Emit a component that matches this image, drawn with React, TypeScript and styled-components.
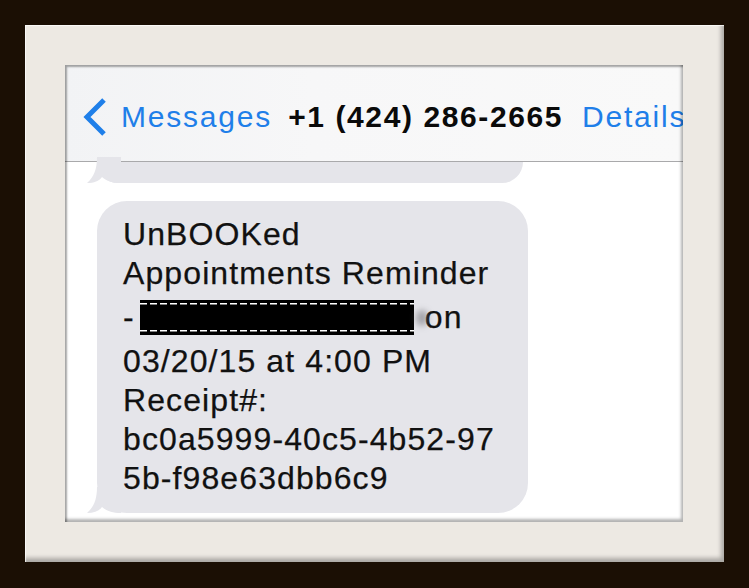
import React from "react";
import styled, { createGlobalStyle } from "styled-components";

const GlobalStyle = createGlobalStyle`
    html, body {
        margin: 0;
        padding: 0;
        background: #1b0f04;
    }
`;

const Frame = styled.div`
    width: 749px;
    height: 588px;
    box-sizing: border-box;
    padding: 25px;
    background: #1b0f04;
    font-family: "Liberation Sans", Arial, Helvetica, sans-serif;
`;

const Matte = styled.div`
    width: 699px;
    height: 537px;
    box-sizing: border-box;
    padding: 40px 0 0 40px;
    background: #ede9e3;
    box-shadow: inset 1px 1px 1px rgba(255, 255, 255, 0.8),
        inset -3px -4px 4px rgba(0, 0, 0, 0.28);
`;

const Screen = styled.div`
    position: relative;
    width: 618px;
    height: 457px;
    overflow: hidden;
    background: #ffffff;
    display: flex;
    flex-direction: column;

    &::after {
        content: "";
        position: absolute;
        inset: 0;
        pointer-events: none;
        box-shadow: inset 2px 2px 2px rgba(0, 0, 0, 0.35),
            inset -2px -3px 3px rgba(0, 0, 0, 0.3);
    }
`;

const NavBar = styled.div`
    flex-shrink: 0;
    height: 97px;
    box-sizing: border-box;
    padding: 8px 0 0 17px;
    display: flex;
    align-items: center;
    background: linear-gradient(90deg, #f2f3f5 0%, #f7f7f8 40%, #f9f9f9 100%);
    border-bottom: 1px solid #a9a9ab;
    white-space: nowrap;
`;

const BackChevron = styled.svg`
    flex-shrink: 0;
    width: 26px;
    height: 40px;
    margin-right: 13px;
`;

const NavLink = styled.span<{ $gap?: number }>`
    flex-shrink: 0;
    color: #1f7fe9;
    font-size: 30px;
    letter-spacing: 1.8px;
    margin-right: ${(p) => p.$gap ?? 0}px;
`;

const NavTitle = styled.span`
    flex-shrink: 0;
    color: #0a0a0a;
    font-size: 30px;
    font-weight: 700;
    letter-spacing: 1.6px;
    margin-right: 19px;
`;

const Thread = styled.div`
    display: flex;
    flex-direction: column;
    align-items: flex-start;
    padding-left: 32px;
`;

const PeekBubble = styled.div`
    position: relative;
    width: 426px;
    height: 21px;
    background: #e5e5ea;
    border-radius: 0 0 28px 28px;
`;

const Bubble = styled.div`
    position: relative;
    width: 431px;
    box-sizing: border-box;
    margin-top: 18px;
    padding: 14px 0 16px 26px;
    background: #e5e5ea;
    border-radius: 30px;
    color: #111111;
    font-size: 32px;
    letter-spacing: 1.1px;
    -webkit-text-stroke: 0.25px #111111;
`;

const Line = styled.div<{ $tall?: boolean }>`
    line-height: ${(p) => (p.$tall ? "50px" : "38.7px")};
    white-space: nowrap;
`;

const Redacted = styled.span`
    position: relative;
    display: inline-block;
    width: 274px;
    height: 35px;
    margin-left: 5px;
    vertical-align: -7px;
    background:
        repeating-linear-gradient(90deg, #ffffff 0 7px, transparent 7px 10px) 0 3px / 100% 1.5px no-repeat,
        repeating-linear-gradient(90deg, #ffffff 0 7px, transparent 7px 10px) 0 30px / 100% 1.5px no-repeat,
        #000000;
`;

const Smudge = styled.span`
    display: inline-block;
    width: 12px;
    height: 16px;
    margin: 0 -3px 0 2px;
    vertical-align: 2px;
    border-radius: 50%;
    background: rgba(110, 110, 115, 0.55);
    filter: blur(3px);
`;

const Tail = styled.svg`
    position: absolute;
    left: -10px;
    bottom: 0;
    width: 34px;
    height: 26px;
`;

const BubbleTail = () => (
    <Tail viewBox="0 0 34 26">
        <path
            d="M10 0 C10 12 7 20 0 26 C7 26 12 24 15 20 C20 24 25 26 34 26 L34 0 Z"
            fill="#e5e5ea"
        />
    </Tail>
);

const App = () => {
    return (
        <>
            <GlobalStyle />
            <Frame>
                <Matte>
                    <Screen>
                        <NavBar>
                            <BackChevron viewBox="0 0 26 40">
                                <path
                                    d="M22 3 L5 20 L22 37"
                                    fill="none"
                                    stroke="#1f7fe9"
                                    strokeWidth="5"
                                    strokeLinejoin="miter"
                                />
                            </BackChevron>
                            <NavLink $gap={16}>Messages</NavLink>
                            <NavTitle>+1 (424) 286-2665</NavTitle>
                            <NavLink>Details</NavLink>
                        </NavBar>
                        <Thread>
                            <PeekBubble>
                                <BubbleTail />
                            </PeekBubble>
                            <Bubble>
                                <Line>UnBOOKed</Line>
                                <Line>Appointments Reminder</Line>
                                <Line $tall>
                                    -<Redacted />
                                    <Smudge />on
                                </Line>
                                <Line>03/20/15 at 4:00 PM</Line>
                                <Line>Receipt#:</Line>
                                <Line>bc0a5999-40c5-4b52-97</Line>
                                <Line>5b-f98e63dbb6c9</Line>
                                <BubbleTail />
                            </Bubble>
                        </Thread>
                    </Screen>
                </Matte>
            </Frame>
        </>
    );
};

export default App;
